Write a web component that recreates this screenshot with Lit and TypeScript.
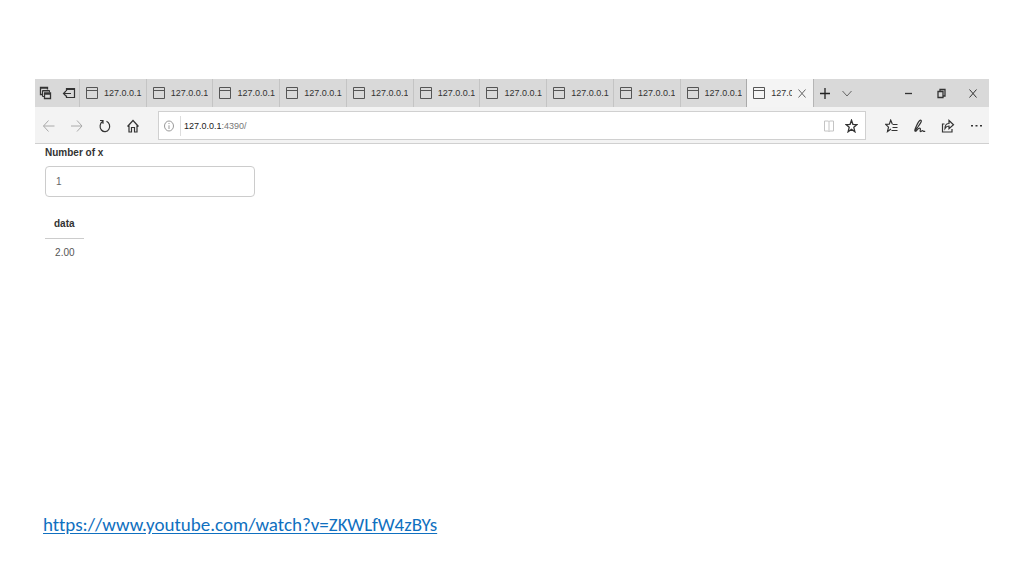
import { LitElement, html, css, svg } from "lit";
import { customElement, state } from "lit/decorators.js";

const icon = (body: unknown, w = 14, h = 14, cls = "") =>
  html`<svg class=${cls} width=${w} height=${h} viewBox="0 0 ${w} ${h}" aria-hidden="true">${body}</svg>`;

const icons = {
  tabsAside: svg`<path d="M3.500 8.500h-2v-7h7v2M1.500 2.200h7" stroke-width="1.300"/><path d="M5 10.500h-1.500v-6h7v2M3.500 5h7"/><path d="M5.500 7h6v5.500h-6zM5.500 8h6" stroke-width="1.300"/>`,
  setAside: svg`<path d="M4.500 5v-2.500h8v9h-8v-2M4.500 3.500h8M9 7.500h-7.500M4 5l-2.500 2.500 2.500 2.500" stroke-width="1.200"/>`,
  page: svg`<path d="M1.500 1.500h11v11h-11zM1.500 4.500h11"/>`,
  close: svg`<path d="M1.500 1.500l7 8M8.500 1.500l-7 8"/>`,
  plus: svg`<path d="M6 2v11M1 7.500h10" stroke-width="1.300"/>`,
  chevron: svg`<path d="M1.500 5l4.500 5 4.500-5"/>`,
  minimise: svg`<path d="M3 7.500h7" stroke-width="1.300"/>`,
  restore: svg`<path d="M3 5.500h5v6h-5zM5 5.500v-2h5v6.500h-2" stroke-width="1.300"/>`,
  back: svg`<path d="M12.500 7h-11M6.500 1.500l-5 5.500 5 5.500"/>`,
  forward: svg`<path d="M1 7h11M7 1.500l5 5.500-5 5.500"/>`,
  refresh: svg`<path d="M8.500 2.200a4.800 5.400 0 1 1-4 .4M2 1.500h3v3.200" stroke-width="1.200"/>`,
  home: svg`<path d="M1.500 7.500l5.500-6 5.500 6M3 6.500v6.500h2.500v-4.500h3v4.500h2.500v-6.500" stroke-width="1.200"/>`,
  info: svg`<ellipse cx="6" cy="7" rx="4.500" ry="5"/><path d="M6 6.300v3.700M6 4v1"/>`,
  reading: svg`<path d="M1.500 2h4l.5.700.500-.700h4v10h-4l-.500.700-.500-.700h-4zM6 2.500v10"/>`,
  star: svg`<path d="M6.500 1.200l1.400 4.100 4 .2-3.100 2.800 1.100 4.500-3.400-2.500-3.400 2.500 1.100-4.500-3.100-2.800 4-.2z" stroke-width="1.300"/>`,
  favourites: svg`<path d="M7.300 5.100l-1.600-3.900-1.400 4-3.600.2 2.800 2.700-1 4.400 3.500-2.500M7.500 5.500h5M7.500 8.500h5M6.500 11.500h6" stroke-width="1.200"/>`,
  pen: svg`<path d="M2.800 12.500c-1.800-.3-.8-2.500.5-5.300s3.200-6.700 4.600-6-.9 3.500-2.500 6c-1.300 2-4 4-2.600 5.300M3 12.300c1.200-1.500 2.700-3.600 4-3 1.200.6-.5 2.800.4 3.200s1.200-1 2-.900.8 1.300 2.800.7" stroke-width="1.200"/>`,
  share: svg`<path d="M3.500 5h-2v8h9.500v-3M4 9.500c0-3.500 1.500-5 4-5v-3l4.500 4.200-4.500 4v-2.700c-2 0-3 .7-4 2.500z" stroke-width="1.200"/>`,
  more: svg`<g fill="currentColor" stroke="none"><rect x="2" y="6" width="2" height="1.500"/><rect x="6.500" y="6" width="2" height="1.500"/><rect x="11" y="6" width="2" height="1.500"/></g>`,
};

@customElement("browser-window")
export class BrowserWindow extends LitElement {
  @state() private tabs = Array.from({ length: 11 }, () => "127.0.0.1");
  @state() private active = 10;

  static styles = css`
    :host { display: block; color: #333; }
    button {
      appearance: none; border: 0; padding: 0; margin: 0; background: none;
      color: inherit; font: inherit; display: flex; align-items: center; justify-content: center;
    }
    svg { fill: none; stroke: currentColor; flex: none; display: block; }
    .strip { display: flex; height: 28px; background: #d9d9d9; }
    .aside { display: flex; align-items: center; width: 44px; padding-left: 4px; gap: 9px; box-sizing: border-box; }
    .tabs { display: flex; flex: 1; min-width: 0; }
    .tab {
      flex: 1 1 0; min-width: 0; display: flex; align-items: center; gap: 5px;
      border-left: 1px solid #c4c4c4; padding-left: 5px; overflow: hidden;
    }
    .name { font-size: 9px; line-height: 16px; white-space: nowrap; overflow: hidden; }
    .tab .page { color: #555; }
    .select { flex: none; gap: 5px; }
    .tab.on { background: #f4f4f4; border-color: #aaa; }
    .tab.on .name { width: 21px; text-align: left; }
    .tab.on .shut { color: #666; }
    .ends { display: flex; align-items: center; width: 176px; box-sizing: border-box; border-left: 1px solid #b5b5b5; padding: 0 11px 0 5px; }
    .ends .add { margin-right: 10px; color: #222; }
    .ends .list { color: #666; }
    .sys { display: flex; align-items: center; gap: 20px; margin-left: auto; }
    .bar {
      display: flex; align-items: center; height: 37px; box-sizing: border-box;
      background: #f3f3f3; border-bottom: 1px solid #d0d0d0; padding: 1px 6px 0 7px;
    }
    .nav { display: flex; width: 116px; gap: 14px; }
    .dim { color: #aaa; }
    .address {
      display: flex; align-items: center; flex: 1; height: 29px; box-sizing: border-box;
      background: #fff; border: 1px solid #d0d0d0; padding: 0 7px 0 4px;
    }
    .address .info { color: #999; }
    .url {
      display: flex; align-items: center; flex: 1; height: 20px;
      border-left: 1px solid #ddd; margin-left: 5px; padding-left: 3px; font-size: 9px;
    }
    .host { color: #222; }
    .path { color: #777; }
    .reader { color: #c4c4c4; margin-right: 10px; }
    .tools { display: flex; gap: 14px; padding-left: 19px; }
  `;

  render() {
    return html`
      <div class="strip">
        <div class="aside">
          <button aria-label="Tabs set aside">${icon(icons.tabsAside)}</button>
          <button aria-label="Set tabs aside">${icon(icons.setAside)}</button>
        </div>
        <div class="tabs">
          ${this.tabs.map((name, i) => html`
            <div class="tab ${i === this.active ? "on" : ""}">
              <button class="select" @click=${() => (this.active = i)}>
                ${icon(icons.page, 14, 14, "page")}<span class="name">${name}</span>
              </button>
              ${i === this.active ? html`<button class="shut" aria-label="Close tab">${icon(icons.close, 10, 11)}</button>` : ""}
            </div>`)}
        </div>
        <div class="ends">
          <button class="add" aria-label="New tab">${icon(icons.plus, 12, 14)}</button>
          <button class="list" aria-label="Tab previews">${icon(icons.chevron, 12, 14)}</button>
          <div class="sys">
            <button aria-label="Minimise">${icon(icons.minimise, 13, 14)}</button>
            <button aria-label="Restore">${icon(icons.restore, 13, 14)}</button>
            <button aria-label="Close">${icon(icons.close, 10, 11)}</button>
          </div>
        </div>
      </div>
      <div class="bar">
        <div class="nav">
          <button class="dim" aria-label="Back">${icon(icons.back)}</button>
          <button class="dim" aria-label="Forward">${icon(icons.forward)}</button>
          <button aria-label="Refresh">${icon(icons.refresh)}</button>
          <button aria-label="Home">${icon(icons.home)}</button>
        </div>
        <div class="address">
          <button class="info" aria-label="Site information">${icon(icons.info, 12, 14)}</button>
          <div class="url"><span class="host">127.0.0.1</span><span class="path">:4390/</span></div>
          <button class="reader" aria-label="Reading view">${icon(icons.reading, 12, 14)}</button>
          <button aria-label="Add to favourites">${icon(icons.star, 13, 14)}</button>
        </div>
        <div class="tools">
          <button aria-label="Favourites">${icon(icons.favourites)}</button>
          <button aria-label="Add notes">${icon(icons.pen)}</button>
          <button aria-label="Share">${icon(icons.share)}</button>
          <button aria-label="More">${icon(icons.more)}</button>
        </div>
      </div>`;
  }
}

@customElement("app-root")
export class AppRoot extends LitElement {
  @state() private value = "1";

  static styles = css`
    :host {
      display: flex; flex-direction: column; min-height: 100vh; box-sizing: border-box;
      padding: 79px 35px 38px; background: #fff; color: #333;
      font-family: "Liberation Sans", Arial, sans-serif;
    }
    .content { padding: 1px 10px 0; font-size: 10px; line-height: 16px; }
    .field { display: flex; flex-direction: column; align-items: flex-start; gap: 5px; }
    label { font-weight: bold; }
    input {
      width: 210px; height: 31px; box-sizing: border-box; border: 1px solid #ccc; border-radius: 4px;
      padding: 0 10px; font: inherit; color: #666; background: #fff; outline: none;
    }
    table { border-collapse: collapse; margin-top: 13px; }
    th, td { padding: 6px 9px; text-align: right; }
    th { border-bottom: 1px solid #ccc; }
    td { color: #555; }
    .link {
      margin: auto 0 0 8px; align-self: flex-start; color: #1070c0;
      font: 19px/26px Carlito, Calibri, Lato, sans-serif;
      font-variant-ligatures: none;
      text-underline-offset: 2px;
    }
  `;

  render() {
    return html`
      <browser-window></browser-window>
      <div class="content">
        <div class="field">
          <label for="x">Number of x</label>
          <input id="x" type="text" inputmode="numeric" .value=${this.value}
            @input=${(e: Event) => (this.value = (e.target as HTMLInputElement).value)} />
        </div>
        <table>
          <thead><tr><th>data</th></tr></thead>
          <tbody><tr><td>${(Number(this.value) + 1).toFixed(2)}</td></tr></tbody>
        </table>
      </div>
      <a class="link" href="https://www.youtube.com/watch?v=ZKWLfW4zBYs">https://www.youtube.com/watch?v=ZKWLfW4zBYs</a>`;
  }
}
